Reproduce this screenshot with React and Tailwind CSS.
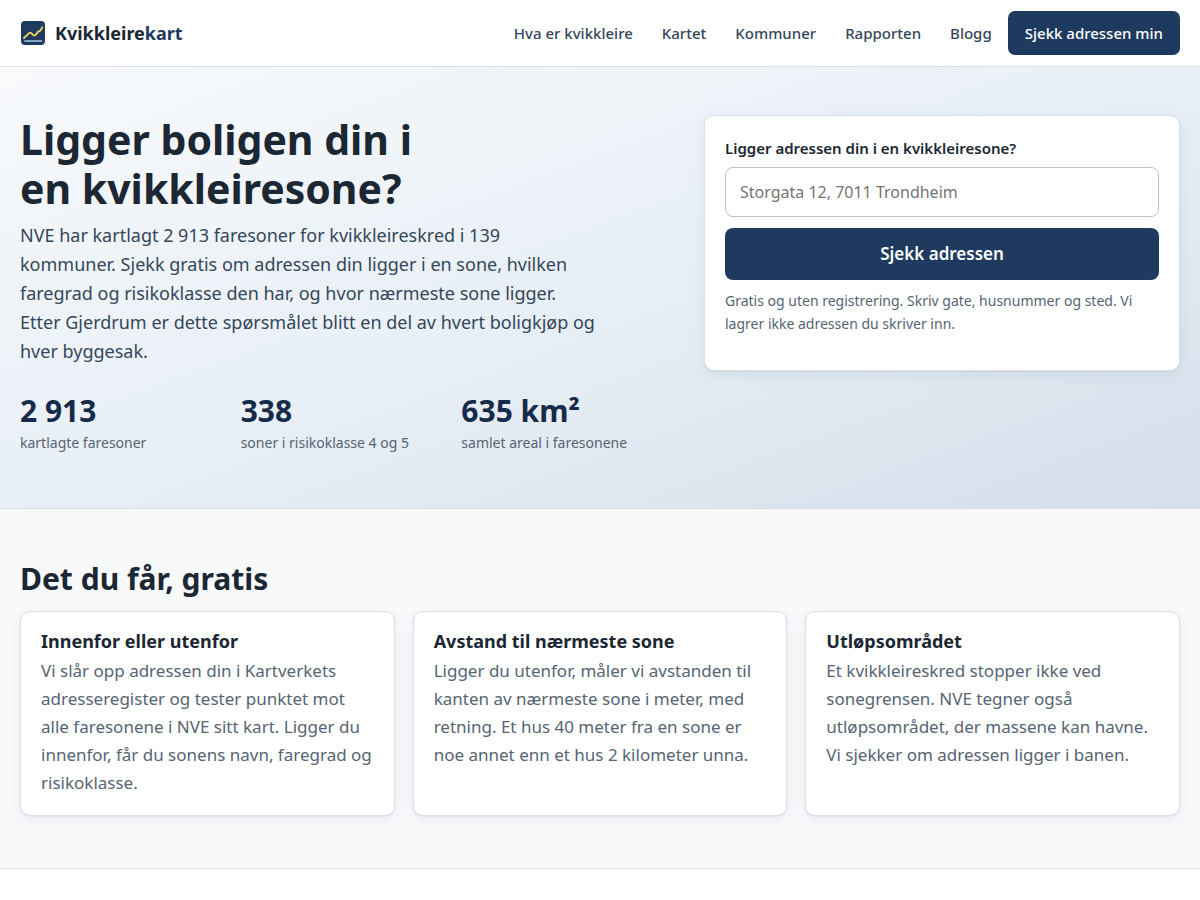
import React, { useState } from "react";

const navLinks = [
  { label: "Hva er kvikkleire", href: "#kvikkleire" },
  { label: "Kartet", href: "#kartet" },
  { label: "Kommuner", href: "#kommuner" },
  { label: "Rapporten", href: "#rapporten" },
  { label: "Blogg", href: "#blogg" },
];

const stats = [
  { value: "2 913", label: "kartlagte faresoner" },
  { value: "338", label: "soner i risikoklasse 4 og 5" },
  { value: "635 km²", label: "samlet areal i faresonene" },
];

const features = [
  {
    title: "Innenfor eller utenfor",
    text: "Vi slår opp adressen din i Kartverkets adresseregister og tester punktet mot alle faresonene i NVE sitt kart. Ligger du innenfor, får du sonens navn, faregrad og risikoklasse.",
  },
  {
    title: "Avstand til nærmeste sone",
    text: "Ligger du utenfor, måler vi avstanden til kanten av nærmeste sone i meter, med retning. Et hus 40 meter fra en sone er noe annet enn et hus 2 kilometer unna.",
  },
  {
    title: "Utløpsområdet",
    text: "Et kvikkleireskred stopper ikke ved sonegrensen. NVE tegner også utløpsområdet, der massene kan havne. Vi sjekker om adressen ligger i banen.",
  },
];

const Logo = () => (
  <svg width="26" height="26" viewBox="0 0 26 26" fill="none" aria-hidden="true">
    <rect x="1" y="1" width="24" height="24" rx="4" fill="#1e3a5f" />
    <path
      d="M4 18 L8.8 13.4 Q10.2 12 11.6 13.4 L13.2 15 Q14.6 16.2 15.9 14.6 L18.4 11.4 Q20.6 11 21.2 9.4 L22.2 7.4"
      stroke="#e6cc62"
      strokeWidth="2"
      strokeLinecap="round"
      strokeLinejoin="round"
    />
    <path d="M5 21H21.5" stroke="#86a3bf" strokeWidth="1.8" strokeLinecap="round" />
  </svg>
);

const Header = () => (
  <header className="border-b border-[#d9e0e7] bg-white">
    <div className="mx-auto box-content flex min-h-[66px] max-w-[1160px] flex-wrap items-center justify-between gap-x-4 px-5">
      <a href="#top" className="flex items-center gap-[9px] text-lg leading-[25px] font-bold text-[#1b2733]">
        <Logo />
        <span>
          Kvikkleire<span className="text-[#1e3a5f]">kart</span>
        </span>
      </a>
      <nav className="flex flex-wrap items-center gap-4 text-[15px] leading-[21px] font-medium">
        <div className="flex flex-wrap gap-[29px]">
          {navLinks.map((link) => (
            <a key={link.label} href={link.href} className="text-[#34475a] hover:text-[#1e3a5f]">
              {link.label}
            </a>
          ))}
        </div>
        <a
          href="#adresse"
          className="flex h-11 items-center rounded-[7px] bg-[#1e3a5f] px-[17px] text-white hover:bg-[#152b49]"
        >
          Sjekk adressen min
        </a>
      </nav>
    </div>
  </header>
);

const AddressForm = () => {
  const [address, setAddress] = useState("");

  return (
    <form
      onSubmit={(e) => e.preventDefault()}
      className="self-start rounded-[10px] border border-[#d9e0e7] bg-white px-5 pt-5 pb-[35px] shadow-[0_1px_2px_rgba(20,40,70,0.06),0_4px_16px_rgba(20,40,70,0.06)]"
    >
      <label htmlFor="adresse" className="mb-[6px] block text-[15px] leading-[25px] font-semibold text-[#1b2733]">
        Ligger adressen din i en kvikkleiresone?
      </label>
      <input
        id="adresse"
        type="text"
        value={address}
        onChange={(e) => setAddress(e.target.value)}
        placeholder="Storgata 12, 7011 Trondheim"
        className="block h-[50px] w-full rounded-lg border border-[#b8c4d0] bg-white px-[14px] text-base text-[#1b2733] placeholder:text-[#757575]"
      />
      <button
        type="submit"
        className="mt-[11px] block h-[52px] w-full rounded-lg bg-[#1e3a5f] text-[17px] font-semibold text-white hover:bg-[#152b49]"
      >
        Sjekk adressen
      </button>
      <p className="mt-[9px] text-sm leading-[23px] text-[#566473]">
        Gratis og uten registrering. Skriv gate, husnummer og sted. Vi lagrer ikke adressen du skriver inn.
      </p>
    </form>
  );
};

const Hero = () => (
  <section className="border-b border-[#d3dde7] bg-[linear-gradient(160deg,#f8fafc_0%,#e8eff6_50%,#d5dfea_100%)]">
    <div className="mx-auto box-content grid max-w-[1160px] gap-10 px-5 pt-12 pb-[52px] md:grid-cols-[23fr_17fr]">
      <div>
        <h1 className="text-[41px] leading-[49px] font-bold text-[#1b2733]">
          Ligger boligen din i
          <br />
          en kvikkleiresone?
        </h1>
        <p className="mt-2 max-w-[580px] text-lg leading-[29px] text-[#34475a]">
          NVE har kartlagt 2 913 faresoner for kvikkleireskred i 139 kommuner. Sjekk gratis om adressen din
          ligger i en sone, hvilken faregrad og risikoklasse den har, og hvor nærmeste sone ligger. Etter
          Gjerdrum er dette spørsmålet blitt en del av hvert boligkjøp og hver byggesak.
        </p>
        <dl className="mt-[26px] grid grid-cols-3 gap-[18px]">
          {stats.map((stat) => (
            <div key={stat.label} className="flex flex-col-reverse">
              <dt className="text-sm leading-[26px] text-[#566473]">{stat.label}</dt>
              <dd className="text-3xl leading-[38px] font-bold text-[#152b49]">{stat.value}</dd>
            </div>
          ))}
        </dl>
      </div>
      <AddressForm />
    </div>
  </section>
);

const Features = () => (
  <section className="border-b border-[#d9e0e7] bg-[#f8f9fb]">
    <div className="mx-auto box-content max-w-[1160px] px-5 py-[52px]">
      <h2 className="mb-[14px] text-3xl leading-9 font-bold text-[#1b2733]">Det du får, gratis</h2>
      <div className="grid gap-[18px] md:grid-cols-3">
        {features.map((feature) => (
          <article
            key={feature.title}
            className="rounded-[10px] border border-[#d9e0e7] bg-white px-5 py-[18px] shadow-[0_1px_2px_rgba(20,40,70,0.06),0_4px_16px_rgba(20,40,70,0.06)]"
          >
            <h3 className="mb-1 text-lg leading-[23px] font-bold text-[#1b2733]">{feature.title}</h3>
            <p className="text-[17px] leading-7 text-[#566473]">{feature.text}</p>
          </article>
        ))}
      </div>
    </div>
  </section>
);

const App = () => {
  return (
    <div id="top" className="min-h-screen bg-white font-['Noto_Sans',sans-serif]">
      <Header />
      <main>
        <Hero />
        <Features />
      </main>
    </div>
  );
};

export default App;
